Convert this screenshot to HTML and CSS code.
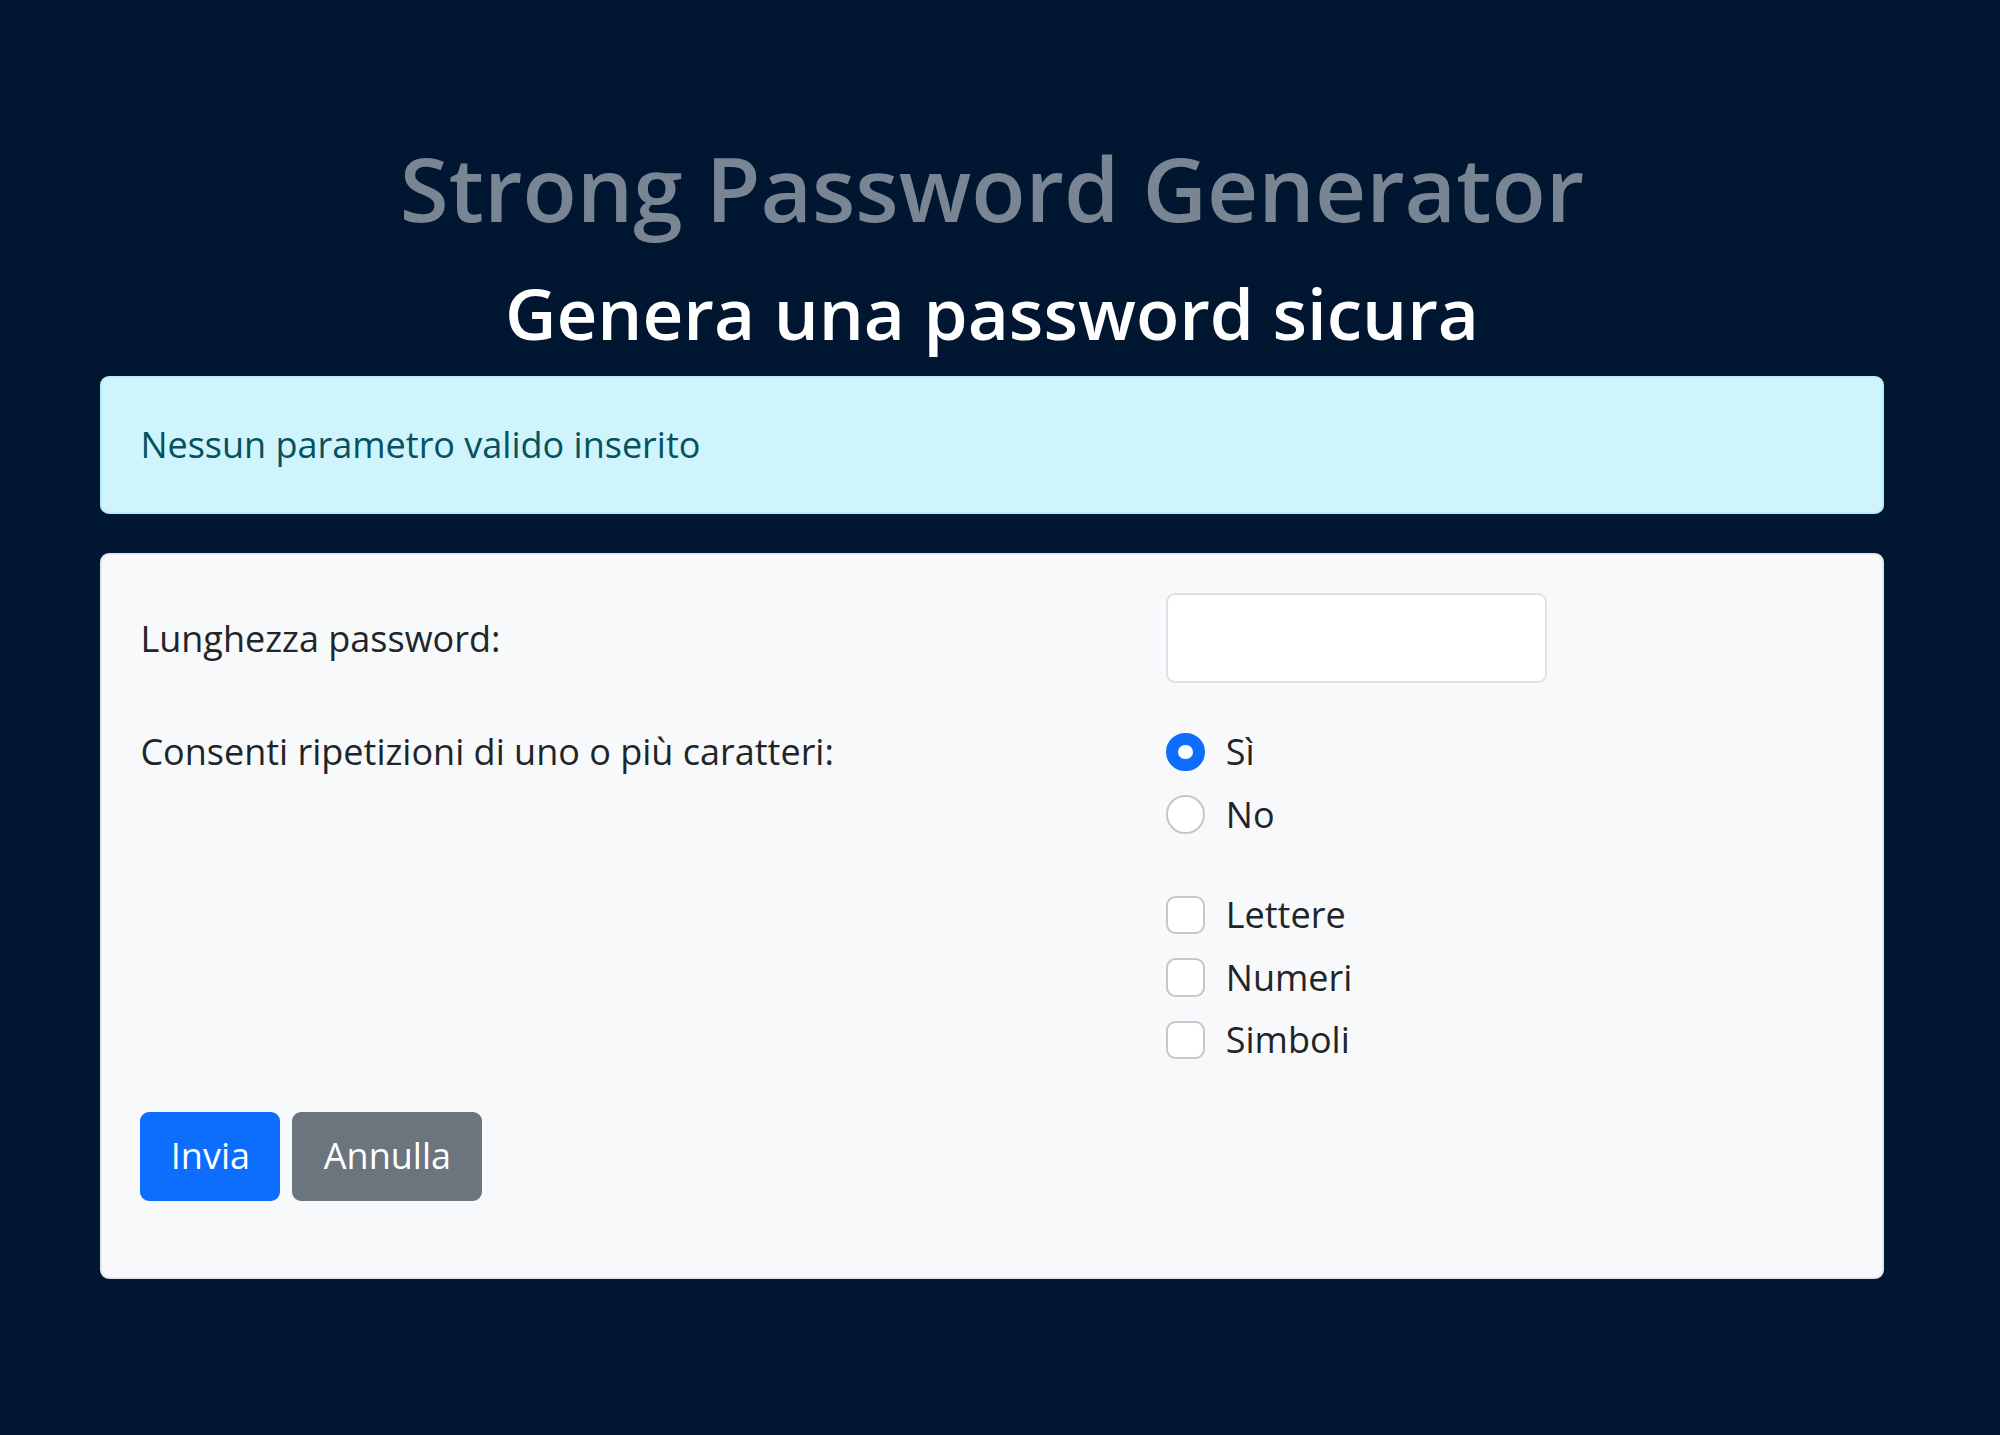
FILE: index.html
```html
<!DOCTYPE html>
<html lang="it">
<head>
<meta charset="utf-8">
<title>Strong Password Generator</title>
<link rel="stylesheet" href="styles.css">
</head>
<body>
<main class="container">
  <header class="heading">
    <h1 class="title">Strong Password Generator</h1>
    <h2 class="subtitle">Genera una password sicura</h2>
  </header>
  <div class="alert">Nessun parametro valido inserito</div>
  <form class="card">
    <div class="row row-length">
      <label class="row-label" for="len">Lunghezza password:</label>
      <div class="row-field"><input class="text-input" id="len" type="text"></div>
    </div>
    <div class="row row-options">
      <div class="row-label">Consenti ripetizioni di uno o più caratteri:</div>
      <div class="row-field">
        <div class="choice-group">
          <label class="choice"><span class="radio checked"></span>Sì</label>
          <label class="choice"><span class="radio"></span>No</label>
        </div>
        <div class="choice-group">
          <label class="choice"><span class="check"></span>Lettere</label>
          <label class="choice"><span class="check"></span>Numeri</label>
          <label class="choice"><span class="check"></span>Simboli</label>
        </div>
      </div>
    </div>
    <div class="actions">
      <button type="button" class="btn btn-primary">Invia</button>
      <button type="button" class="btn btn-secondary">Annulla</button>
    </div>
  </form>
</main>
</body>
</html>
```
FILE: styles.css
```css
html, body {
  margin: 0;
  padding: 0;
}
body {
  background: #001631;
  font-family: "Open Sans", "Noto Sans", sans-serif;
  font-size: 36px;
  line-height: 57.6px;
  color: #212529;
  min-height: 1435px;
}
.container {
  width: 1784px;
  margin-left: 100px;
  padding-top: 135px;
}
.heading {
  text-align: center;
}
.title {
  margin: 0;
  font-size: 89px;
  font-weight: 600;
  line-height: 1.2;
  color: #7a8593;
}
.subtitle {
  margin: 28px 0 0;
  font-size: 71px;
  font-weight: 600;
  line-height: 1.2;
  color: #ffffff;
}
.alert {
  margin-top: 21px;
  box-sizing: border-box;
  height: 138px;
  padding: 0 38.4px;
  display: flex;
  align-items: center;
  background: #cff4fc;
  border: 2.4px solid #b6eefa;
  border-radius: 9px;
  color: #055160;
}
.card {
  margin-top: 39px;
  box-sizing: border-box;
  background: #f8f9fa;
  border: 2.4px solid #e3e6ea;
  border-radius: 9px;
  padding: 38.4px 38.4px 76px;
}
.row {
  display: flex;
}
.row-label {
  width: 1026px;
  flex: none;
}
.row-length {
  align-items: center;
  margin-bottom: 40px;
}
.row-field {
  flex: 1;
}
.text-input {
  display: block;
  box-sizing: border-box;
  width: 381px;
  height: 90px;
  border: 2.4px solid #dee2e6;
  border-radius: 9px;
  background: #fff;
  font: inherit;
  padding: 0 18px;
}
.choice-group {
  display: flex;
  flex-direction: column;
  gap: 4.8px;
}
.choice-group + .choice-group {
  margin-top: 43px;
}
.choice {
  display: flex;
  align-items: center;
  gap: 21px;
  height: 57.6px;
  line-height: 57.6px;
}
.radio, .check {
  box-sizing: border-box;
  width: 38.4px;
  height: 38.4px;
  flex: none;
  background: #fff;
  border: 2.4px solid #c4c8cc;
}
.radio {
  border-radius: 50%;
}
.radio.checked {
  background: #fff;
  border: 12.5px solid #0d6efd;
}
.check {
  border-radius: 9.6px;
}
.actions {
  display: flex;
  gap: 12px;
  margin-top: 43px;
}
.btn {
  box-sizing: border-box;
  height: 89px;
  padding: 0;
  border: 2.4px solid transparent;
  border-radius: 9px;
  font: inherit;
  color: #fff;
}
.btn-primary {
  background: #0d6efd;
  border-color: #0d6efd;
  width: 140px;
}
.btn-secondary {
  background: #6c757d;
  border-color: #6c757d;
  width: 190px;
}
```
